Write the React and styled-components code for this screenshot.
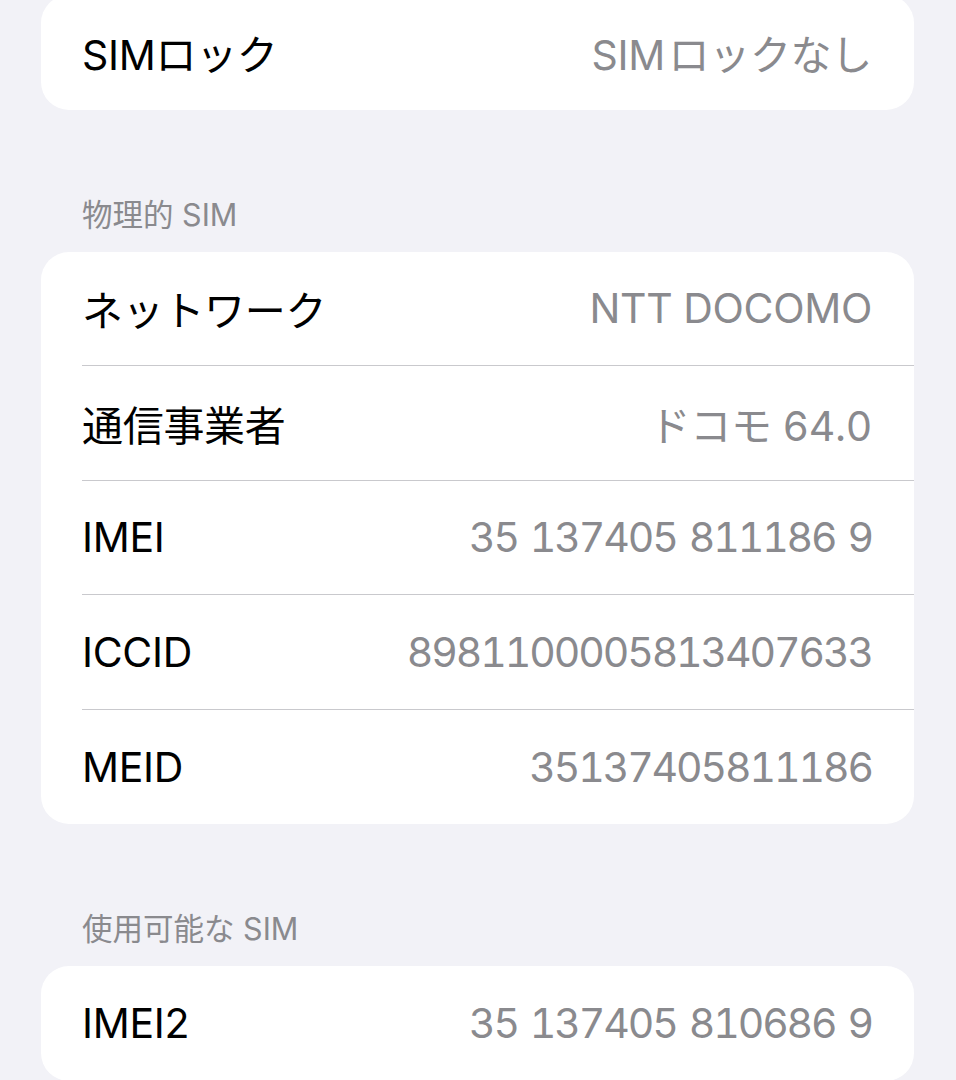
import React from "react";
import styled, { createGlobalStyle } from "styled-components";

const GlobalStyle = createGlobalStyle`
    html, body {
        margin: 0;
        padding: 0;
        background: #f2f2f7;
    }
    body {
        font-family: "Inter", "Noto Sans CJK JP", sans-serif;
        -webkit-font-smoothing: antialiased;
    }
`

const Page = styled.div`
    width: 956px;
    height: 1080px;
    overflow: hidden;
    box-sizing: border-box;
    padding: 0 42px 0 41px;
`

const Card = styled.div`
    background: #fff;
    border-radius: 28px;
    overflow: hidden;
    margin-top: ${props => props.offset || 0}px;
`

const Row = styled.div`
    display: flex;
    align-items: center;
    justify-content: space-between;
    height: 114.5px;
    box-sizing: border-box;
    margin-left: 41px;
    padding-right: 42px;
    border-bottom: ${props => props.last ? "none" : "1px solid #c9c9cd"};
`

const Label = styled.span`
    font-size: 41px;
    color: #000;
    letter-spacing: -0.3px;
`

const Value = styled.span`
    font-size: 41px;
    color: #8a8a8e;
    letter-spacing: ${props => props.numeric ? "-2.1px" : "-0.3px"};
    word-spacing: ${props => props.numeric ? "3px" : "0"};
    font-variant-numeric: tabular-nums;
`

const SectionHeader = styled.div`
    font-size: 30.5px;
    line-height: 40px;
    color: #8a8a8e;
    padding-left: 41px;
    margin: 85px 0 17px;
`

const isNumeric = (text) => /^[\d ]+$/.test(text);

const Group = ({ title, rows, offset }) => (
    <>
        {title && <SectionHeader>{title}</SectionHeader>}
        <Card offset={offset}>
            {rows.map(([label, value], i) => (
                <Row key={label} last={i === rows.length - 1}>
                    <Label>{label}</Label>
                    <Value numeric={isNumeric(value)}>{value}</Value>
                </Row>
            ))}
        </Card>
    </>
);

const App = () => {
    return (
        <>
            <GlobalStyle />
            <Page>
                <Group offset={-5} rows={[["SIMロック", "SIM\u200aロックなし"]]} />
                <Group
                    title="物理的 SIM"
                    rows={[
                        ["ネットワーク", "NTT DOCOMO"],
                        ["通信事業者", "ドコモ 64.0"],
                        ["IMEI", "35 137405 811186 9"],
                        ["ICCID", "8981100005813407633"],
                        ["MEID", "35137405811186"],
                    ]}
                />
                <Group title="使用可能な SIM" rows={[["IMEI2", "35 137405 810686 9"]]} />
            </Page>
        </>
    );
}

export default App;
